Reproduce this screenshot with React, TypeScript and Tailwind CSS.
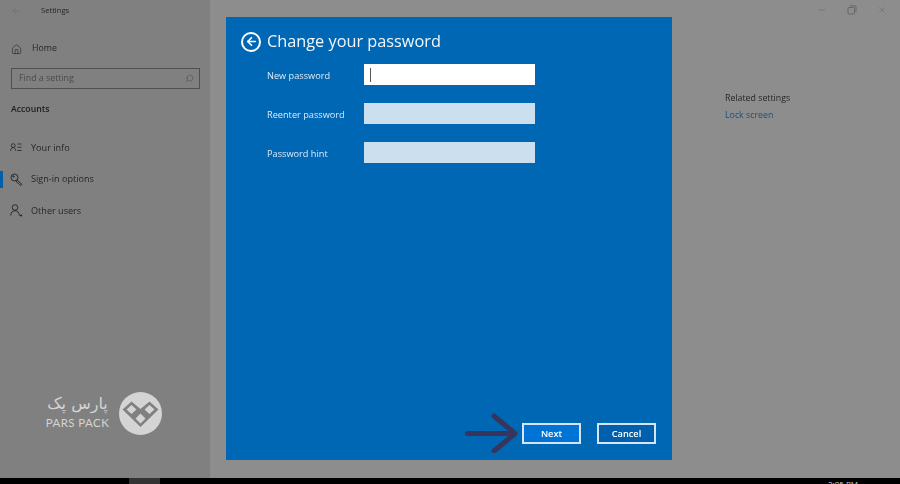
import React from 'react';
import { ArrowLeft, Home, Minus, Search, X } from 'lucide-react';

const NavItem = ({ icon, label, active }: { icon: React.ReactNode; label: string; active?: boolean }) => (
  <div className="relative flex h-[31.5px] items-center pl-[10px]">
    {active && <div className="absolute left-0 top-[7px] h-[17px] w-[3px] bg-[#005fa8]" />}
    <div className="flex w-[21px] justify-start">{icon}</div>
    <span className="text-[9.100px] text-[#262626]">{label}</span>
  </div>
);

const InfoIcon = () => (
  <svg width="12" height="9" viewBox="0 0 12 9" fill="none" stroke="#222" strokeWidth="0.8">
    <circle cx="3.200" cy="2.600" r="1.900" />
    <path d="M0.600 8c0-2 1-3.300 2.600-3.300S5.800 6 5.800 8M7.500 1h4M7.500 4.200h4M7.500 7.500h4" />
  </svg>
);

const KeyIcon = () => (
  <svg width="13" height="13" viewBox="0 0 13 13" fill="none" stroke="#222" strokeWidth="0.9">
    <circle cx="4.500" cy="4.500" r="3.500" />
    <circle cx="3.500" cy="3.500" r="0.700" />
    <path d="M7 7l5 4.500-1 1-1.500-1-1-1.200-1-.3L6 8" />
  </svg>
);

const OtherUsersIcon = () => (
  <svg width="13" height="13" viewBox="0 0 13 13" fill="none" stroke="#222" strokeWidth="0.9">
    <circle cx="5" cy="3.500" r="2.800" />
    <path d="M0.800 11.500c0-3 1.700-4.800 4.200-4.800s4.200 1.800 4.200 4.800M9.800 11.500h2.400M11 10.300v2.400" />
  </svg>
);

const RestoreIcon = () => (
  <svg width="10" height="10" viewBox="0 0 10 10" fill="none" stroke="#666" strokeWidth="1">
    <rect x="1" y="2.500" width="6.500" height="6.500" rx="1" />
    <path d="M3 0.800h5a1 1 0 0 1 1 1v5" />
  </svg>
);

const Field = ({ label, active }: { label: string; active?: boolean }) => (
  <div className="flex h-[21px] items-center">
    <span className="w-[138px] pl-[41px] pt-[2px] text-[9.200px] font-medium text-[#dfeaf5]">{label}</span>
    <div className={`flex h-[21px] w-[171px] items-center pl-[6px] ${active ? 'bg-white' : 'bg-[#cbdfef]'}`}>
      {active && <div className="h-[14px] w-px bg-[#555]" />}
    </div>
  </div>
);

const ParsPackLogo = () => (
  <div className="absolute left-[44px] top-[392px] flex items-start gap-[8px]">
    <div className="flex w-[67px] flex-col items-center pt-[2px] text-[#d4d4d4]">
      <span className="whitespace-nowrap font-['DejaVu_Sans',sans-serif] text-[16px] leading-[20px]" dir="rtl">پارس پک</span>
      <span className="mt-[3px] whitespace-nowrap font-['Lato',sans-serif] text-[11.500px] leading-[11px] tracking-[0.4px]">PARS PACK</span>
    </div>
    <svg width="43" height="43" viewBox="0 0 43 43">
      <circle cx="21.500" cy="21.500" r="21.500" fill="#d4d4d4" />
      <path d="M3.500 17.500 12.500 9.500 21.500 17 30.500 9.500 39.500 17.500 21.500 35z" fill="#808080" />
      <path d="M7.500 17.500 12.500 13 17.500 17.500 12.500 22zM25.500 17.500 30.500 13 35.500 17.500 30.500 22zM16.500 26.500 21.500 21.500 26.500 26.500 21.500 31.500z" fill="#d4d4d4" />
    </svg>
  </div>
);

export default function App() {
  return (
    <div className="relative flex h-[484px] w-[900px] flex-col overflow-hidden bg-black font-['Open_Sans',sans-serif]">
      <div className="flex h-[478px] blur-[0.3px]">
        <aside className="flex w-[210px] shrink-0 flex-col bg-[#808080]">
          <div className="flex h-[20px] items-center pl-[11px] pt-[1px]">
            <ArrowLeft size={10} className="text-[#6a6a6a]" strokeWidth={1.2} />
            <span className="ml-[20px] text-[7.600px] text-[#262626]">Settings</span>
          </div>
          <div className="mt-[17px] flex h-[24px] items-center pl-[11px]">
            <Home size={11} className="text-[#222]" strokeWidth={1.3} />
            <span className="ml-[10px] text-[8.800px] text-[#262626]">Home</span>
          </div>
          <div className="ml-[11px] mt-[7px] flex h-[21px] w-[189px] items-center justify-between border border-[#505050] pl-[7px] pr-[5px]">
            <span className="text-[8.800px] text-[#4a4a4a]">Find a setting</span>
            <Search size={9} className="-scale-x-100 text-[#4a4a4a]" strokeWidth={1.3} />
          </div>
          <div className="ml-[11px] mt-[14px] text-[8.700px] font-semibold text-[#1c1c1c]">Accounts</div>
          <div className="mt-[16px] flex flex-col">
            <NavItem icon={<InfoIcon />} label="Your info" />
            <NavItem icon={<KeyIcon />} label="Sign-in options" active />
            <NavItem icon={<OtherUsersIcon />} label="Other users" />
          </div>
        </aside>
        <main className="flex flex-1 flex-col bg-[#8d8d8d]">
          <div className="flex h-[20px] items-center justify-end gap-[20px] pr-[13px]">
            <Minus size={10} className="text-[#666]" strokeWidth={1.2} />
            <RestoreIcon />
            <X size={10} className="text-[#666]" strokeWidth={1.2} />
          </div>
          <div className="ml-[515px] mt-[72px] flex flex-col">
            <span className="text-[8.800px] text-[#262626]">Related settings</span>
            <span className="mt-[4px] text-[8.800px] text-[#17507f]">Lock screen</span>
          </div>
        </main>
      </div>
      <div className="relative flex h-[6px] shrink-0 items-start overflow-hidden bg-black">
        <div className="ml-[129px] h-[6px] w-[31px] bg-[#333]" />
        <span className="absolute left-[828px] top-[1px] text-[8px] leading-[10px] text-[#ccc]">2:05 PM</span>
      </div>

      {/* password dialog over the settings window */}
      <div className="absolute left-[226px] top-[17px] flex h-[443px] w-[446px] flex-col bg-[#0067b5] blur-[0.25px]">
        <div className="flex h-[49px] items-center pl-[15px]">
          <div className="flex h-[20px] w-[20px] items-center justify-center rounded-full border-2 border-white">
            <ArrowLeft size={13} className="text-white" strokeWidth={3} />
          </div>
          <h1 className="ml-[6px] text-[16.300px] text-[#f2f7fb]">Change your password</h1>
        </div>
        <div className="-mt-[2px] flex flex-col gap-[18px]">
          <Field label="New password" active />
          <Field label="Reenter password" />
          <Field label="Password hint" />
        </div>
        <div className="mt-auto flex justify-end gap-[16px] pb-[16px] pr-[16px]">
          <button className="h-[21px] w-[59px] border-2 border-[#d5e5f3] bg-[#0074d6] text-[9.200px] font-semibold text-white">Next</button>
          <button className="h-[21px] w-[59px] border-2 border-[#d5e5f3] bg-[#0060ad] text-[9.200px] font-semibold text-white">Cancel</button>
        </div>
      </div>

      {/* arrow annotation pointing at Next */}
      <svg className="absolute left-[464px] top-[413px]" width="56" height="40" viewBox="0 0 56 40" fill="none" stroke="#36365c" strokeWidth="5" strokeLinecap="round" strokeLinejoin="round">
        <path d="M3.500 20.500H50M30 3l21 17.500L30 38" />
      </svg>

      <ParsPackLogo />
    </div>
  );
}
